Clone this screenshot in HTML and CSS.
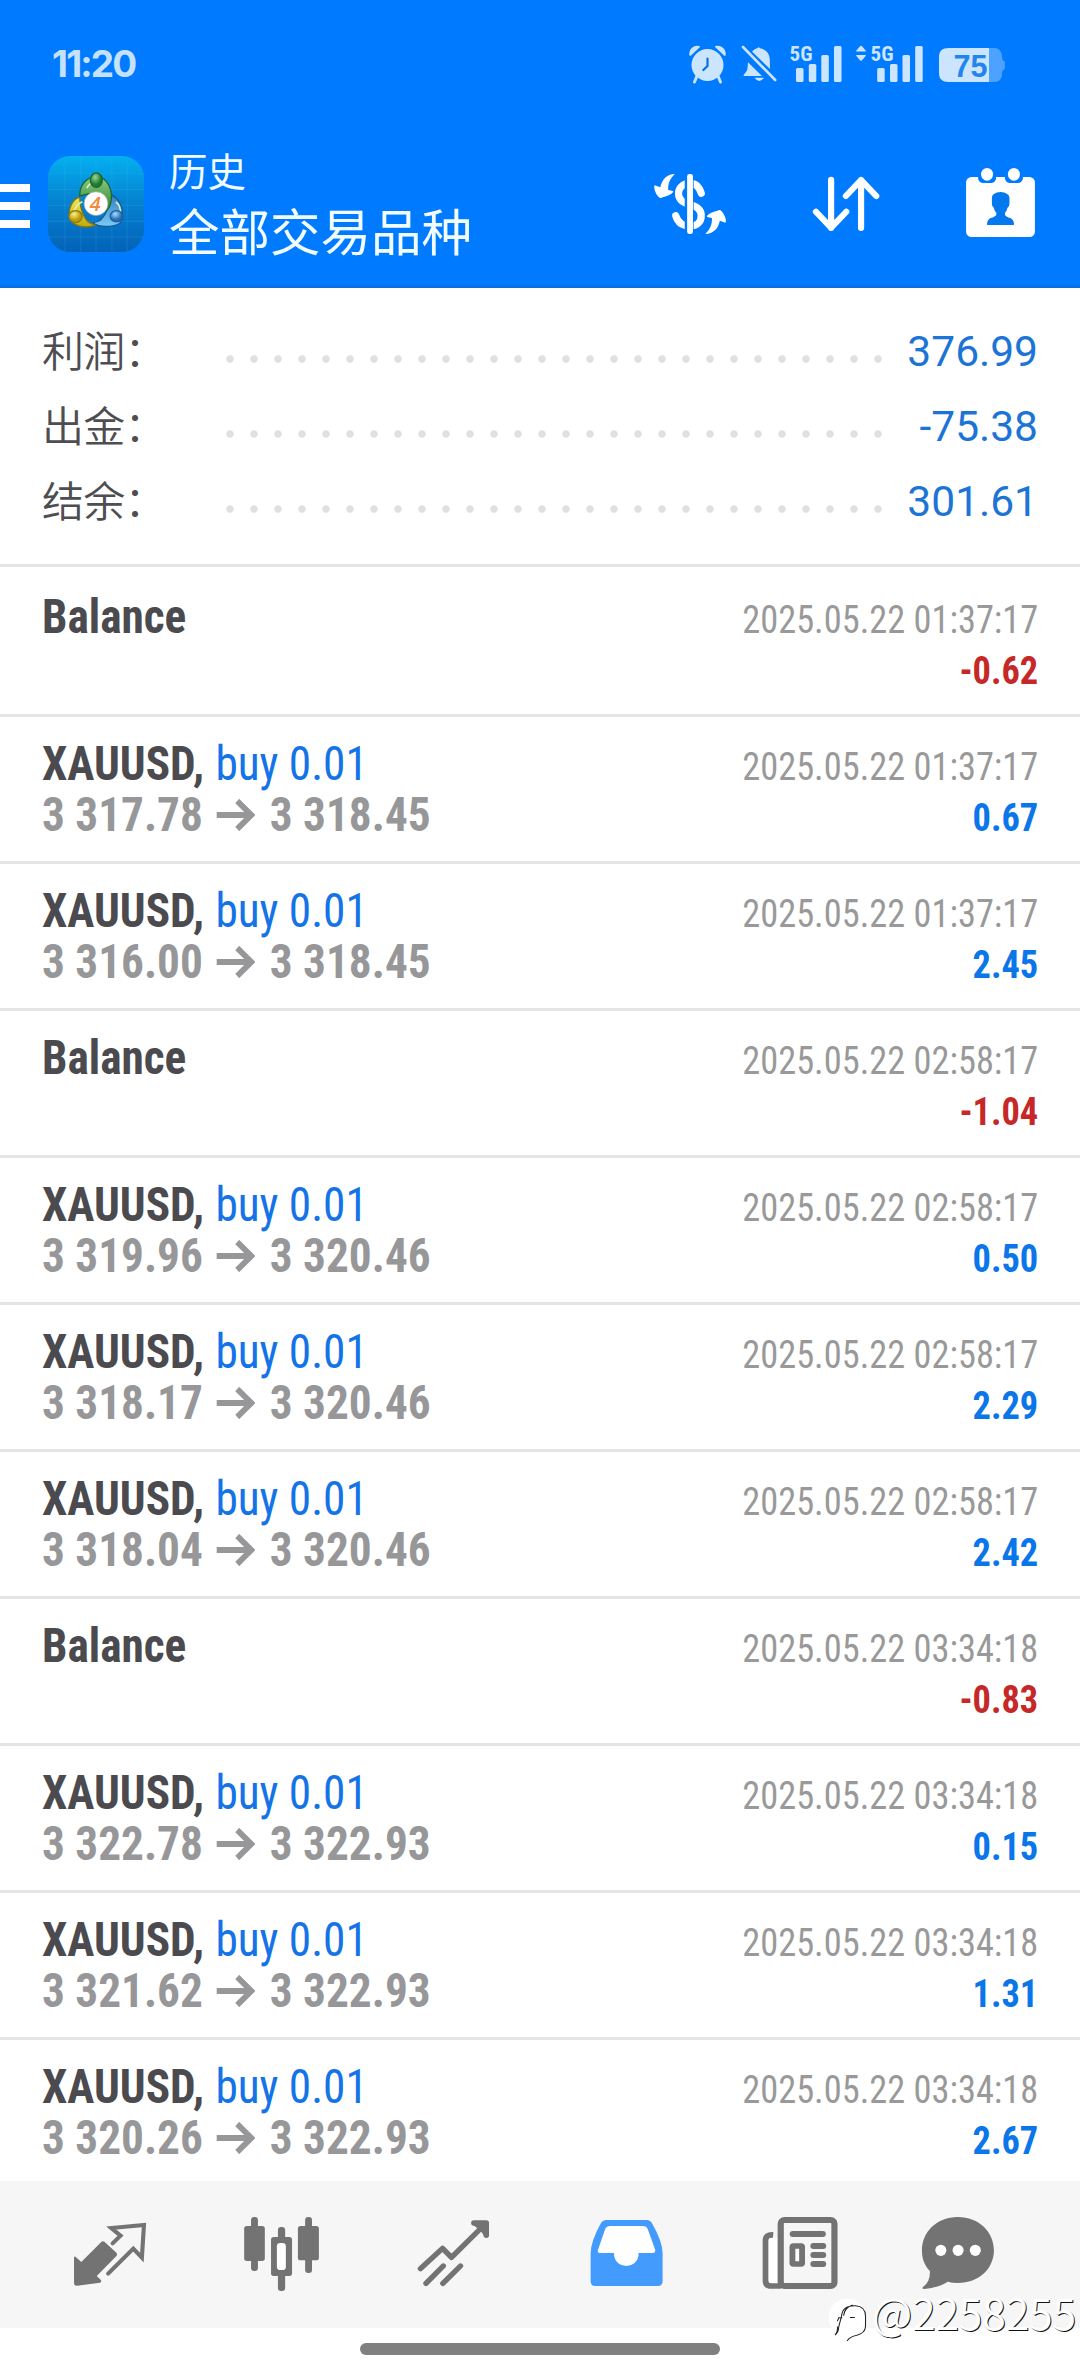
FILE: index.html
```html
<!DOCTYPE html>
<html lang="zh-CN">
<head>
<meta charset="utf-8">
<title>历史</title>
<link rel="stylesheet" href="styles.css">
</head>
<body>
<div class="screen">
  <header class="header">
    <div class="status">
      <time class="clock">11:20</time>
      <svg class="status-icons" viewBox="686 36 324 54" width="324" height="54">
        <g fill="#cce5ff">
          <circle cx="707.5" cy="65" r="16"/>
          <path d="M689.5 55.500a8 8 0 0 1 10-9.500q1 .5 0 1.500l-8.500 8q-1 .9-1.500 0zM725.500 55.500a8 8 0 0 0-10-9.500q-1 .5 0 1.500l8.500 8q1 .9 1.500 0z"/>
          <path d="M697 76l-2.500 6M718 76l2.500 6" stroke="#cce5ff" stroke-width="3" stroke-linecap="round"/>
          <path d="M707.500 58.500v7.500l-4.200 4" fill="none" stroke="#0a6fe0" stroke-width="2.200" stroke-linecap="round"/>
          <path d="M743.500 75.500q0-1 1.500-2.200c3-3 2.500-6 3-11l14 13.800h-17q-1.500 0-1.500-.6zM752 51.500c2-2 4-3 5.500-3.300q1-2 2.500 0c6 1.200 9.500 5.300 9.800 11.300l.2 9.500zM754.500 77.800h9.500q-4.700 6.500-9.500 0z"/>
          <path d="M743 47l32.200 33" stroke="#cce5ff" stroke-width="2.600" stroke-linecap="round"/>
          <text class="net" x="789.500" y="61" textLength="23" lengthAdjust="spacingAndGlyphs">5G</text>
          <text class="net" x="870.500" y="61" textLength="23" lengthAdjust="spacingAndGlyphs">5G</text>
          <g id="bars">
            <rect x="796" y="68" width="7.500" height="14" rx="1.500"/>
            <rect x="808.800" y="64" width="7.500" height="18" rx="1.500"/>
            <rect x="821.300" y="55" width="7.500" height="27" rx="1.500"/>
            <rect x="834" y="46" width="7.500" height="36" rx="1.500"/>
          </g>
          <use href="#bars" x="81.200"/>
          <path d="M856 51.500q0-.7 4-5.200 1-1 2 0 4 4.500 4 5.200zM856 55q0 .7 4 5.200 1 1 2 0 4-4.500 4-5.200z"/>
          <path d="M989 48h5c5 0 7.500 3 8 8 0 3 .5 4.500 2.800 5.500v7.500c-2.300 1-2.800 2.500-2.800 5.500-.5 5-3 7.500-8 7.500h-5z" fill="#4da2ff"/>
          <path d="M989 48h-40c-7 0-10 3-10 9v16c0 6 3 9 10 9h40z"/>
          <text class="charge" x="953.500" y="76.500" textLength="34" lengthAdjust="spacingAndGlyphs">75</text>
        </g>
      </svg>
    </div>
    <div class="appbar">
      <div class="menu"><i></i><i></i><i></i></div>
      <svg class="logo" viewBox="53 47 290 290" width="96" height="96">
        <defs>
          <linearGradient id="lb" x1="0" y1="0" x2="0" y2="1"><stop offset="0" stop-color="#04b0f0"/><stop offset=".45" stop-color="#0584d2"/><stop offset="1" stop-color="#0362b8"/></linearGradient>
          <linearGradient id="lg" x1="0" y1="0" x2="0" y2="1"><stop offset="0" stop-color="#8cc886"/><stop offset="1" stop-color="#2c8a2c"/></linearGradient>
          <linearGradient id="ly" x1="0" y1="0" x2="0" y2="1"><stop offset="0" stop-color="#f3e650"/><stop offset="1" stop-color="#c2a90c"/></linearGradient>
          <linearGradient id="lc" x1="0" y1="0" x2="0" y2="1"><stop offset="0" stop-color="#2e7fc4"/><stop offset="1" stop-color="#7ccaf5"/></linearGradient>
          <radialGradient id="hg" cx=".4" cy=".3"><stop offset="0" stop-color="#9ad794"/><stop offset="1" stop-color="#1f7a2d"/></radialGradient>
          <radialGradient id="hy" cx=".4" cy=".3"><stop offset="0" stop-color="#fff27a"/><stop offset="1" stop-color="#b99a12"/></radialGradient>
          <radialGradient id="hc" cx=".4" cy=".3"><stop offset="0" stop-color="#a6dcff"/><stop offset="1" stop-color="#246fb4"/></radialGradient>
        </defs>
        <rect x="53" y="47" width="290" height="290" rx="66" fill="url(#lb)"/>
        <path d="M104 49v286M152 47v290M198 47v290M246 47v290M292 49v286M53 99h290M53 148h290M53 196h290M53 244h290M53 292h290" stroke="#4cc0f5" stroke-opacity=".22" stroke-width="2.500"/>
        <g stroke-width="4">
          <path d="M187 249c8-4 16-2 24-8 8-8 20-22 22-40l14-36c24 14 38 46 28 78-6 18-60 24-88 6z" fill="url(#lc)" stroke="#175c99"/>
          <path d="M149 172c-20 4-36 30-31 62 10 25 48 34 78 22l-18-8c-10-6-28-30-29-76z" fill="url(#ly)" stroke="#7f7616"/>
          <path d="M149 168c-2-32 20-58 50-58 34 0 54 42 42 84-2 8-6 14-12 18 4-30-14-52-38-52-16 0-28 4-42 8z" fill="url(#lg)" stroke="#1e6532"/>
          <path d="M131 219c2-14 10-28 26-34M170 144c8-15 19-20 30-18M258 186c12 9 15 24 13 34" fill="none" stroke="#d9f0c0" stroke-width="5"/>
          <ellipse cx="199" cy="120" rx="18" ry="22" fill="url(#hg)" stroke="#1e6532"/>
          <ellipse cx="136" cy="230" rx="20" ry="18" fill="url(#hy)" stroke="#8a7a15"/>
          <ellipse cx="260" cy="229" rx="19" ry="17" fill="url(#hc)" stroke="#1c5d9e"/>
        </g>
        <circle cx="198" cy="191" r="36" fill="#fff" stroke="#a3a89a" stroke-width="2"/>
        <text x="196" y="213" class="logo-number">4</text>
      </svg>
      <div class="titles">
        <div class="subtitle">历史</div>
        <h1 class="title">全部交易品种</h1>
      </div>
      <div class="actions">
        <svg viewBox="235 378 435.500 486" width="150" height="162" preserveAspectRatio="none" fill="#fff">
          <path d="M468 580C461 557 450 550 436 550C412 550 402 566 402 580C402 604 420 609 436 614C462 621 468 634 468 647C468 669 452 678 436 678C412 678 399 664 394 647" fill="none" stroke="#fff" stroke-width="21" stroke-linecap="round"/>
          <rect x="420" y="522" width="26" height="180" fill="#007aff"/>
          <rect x="427" y="522" width="17" height="180" rx="7"/>
          <path id="curl" d="M391 522C368 523 354 538 349 562L333 556Q330 559 332 566C334 578 341 588 347 593Q350 595 356 592C366 590 378 586 386 577Q389 573 383 572L372 570C371 548 379 535 391 522Z"/>
          <use href="#curl" transform="rotate(180 435.500 612)"/>
        </svg>
        <svg viewBox="670.500 378 435.500 486" width="150" height="162" preserveAspectRatio="none" fill="none" stroke="#fff" stroke-width="18" stroke-linecap="round" stroke-linejoin="round">
          <path d="M845 539V684M801 635L845 683L889 635M932 684V540M888 588L932 540L976 588"/>
        </svg>
        <svg viewBox="1106 378 462 486" width="159" height="162" preserveAspectRatio="none" fill="#fff">
          <rect x="1237" y="531" width="200" height="180" rx="16"/>
          <path d="M1272 525h52v12q-4 12-14 12h-24q-10 0-14-12zM1350 525h52v12q-4 12-14 12h-24q-10 0-14-12z" fill="#007aff"/>
          <ellipse cx="1298" cy="523" rx="17.500" ry="19"/><ellipse cx="1376" cy="523" rx="17.500" ry="19"/>
          <path d="M1312 592Q1313 578 1337 576Q1361 578 1363 592V612Q1363 620 1357 624Q1355 634 1350 638V644Q1352 650 1366 654Q1377 660 1376 675H1298Q1297 660 1308 654Q1322 650 1325 644V638Q1319 634 1318 624Q1312 620 1312 612Z" fill="#0478ee"/>
        </svg>
      </div>
    </div>
  </header>

  <section class="summary">
    <div class="line"><span class="label">利润：</span><i class="dots"></i><span class="value">376.99</span></div>
    <div class="line"><span class="label">出金：</span><i class="dots"></i><span class="value">-75.38</span></div>
    <div class="line"><span class="label">结余：</span><i class="dots"></i><span class="value">301.61</span></div>
  </section>

  <main class="deals" id="deals"></main>

  <nav class="tabs">
    <svg viewBox="0 93 522.670 441" preserveAspectRatio="none" fill="none" stroke="#737373">
      <path d="M215 322Q217 317 221 322L236 336L294 276Q299 271 304 276L338 308Q342 313 338 318L281 378L293 390Q296 396 290 398L224 407Q215 408 215 399Z" fill="#737373" stroke="none"/>
      <path d="M327 280L350 257L323 234L418 225L412 323L387 296L314 371" stroke-width="12" stroke-linecap="round"/>
    </svg>
    <svg viewBox="522.670 93 522.670 441" preserveAspectRatio="none" fill="#737373">
      <rect x="709" y="228" width="60" height="105" rx="8"/><rect x="729" y="201" width="20" height="162" rx="9"/>
      <rect x="865" y="228" width="61" height="103" rx="8"/><rect x="886" y="201" width="20" height="168" rx="9"/>
      <rect x="787" y="261" width="61" height="117" rx="8"/><rect x="807" y="231" width="21" height="192" rx="9"/>
      <rect x="804" y="279" width="26" height="81" rx="10" fill="#fff"/>
    </svg>
    <svg viewBox="1045.330 93 522.670 441" preserveAspectRatio="none" fill="none" stroke="#737373" stroke-width="16" stroke-linecap="round" stroke-linejoin="round">
      <path d="M1221 356L1285 295L1311 322L1409 222M1376 219H1412V256"/>
      <path d="M1376 219H1412V256L1400 238Z" fill="#737373" stroke-width="12"/>
      <path d="M1237 400L1287 348M1286 400L1337 348"/>
    </svg>
    <svg viewBox="0 93 522.670 441" preserveAspectRatio="none" fill="#429bfd">
      <path d="M192 210H310Q320 210 326 221Q356 275 356 310V394Q356 408 342 408H160Q147 408 147 394V310Q147 275 176 221Q182 210 192 210Z"/>
      <path d="M204 228H298Q309 228 313 238L334 298Q337 309 327 309H286V318A36 36 0 0 1 215 318V309H174Q165 309 169 298L189 238Q193 228 204 228Z" fill="#fff"/>
    </svg>
    <svg viewBox="522.670 93 522.670 441" preserveAspectRatio="none" fill="none" stroke="#737373">
      <path d="M677 255Q655 253 655 272V392Q655 408 671 408H700" stroke-width="17"/>
      <path d="M664 272Q664 264 673 264H690V399H673Q664 399 664 390Z" fill="#fff" stroke="none"/>
      <rect x="699" y="210" width="156" height="198" rx="11" stroke-width="18"/>
      <path d="M734 252H821M794 288H822M794 315H822M794 342H822" stroke-width="18" stroke-linecap="round"/>
      <rect x="733" y="288" width="28" height="54" rx="3" fill="#fff" stroke-width="17"/>
    </svg>
    <svg viewBox="0 93 522.670 441" preserveAspectRatio="none">
      <g transform="translate(-1045.330 0)">
        <path d="M1213 201C1275 201 1318 246 1318 301C1318 356 1275 399 1213 399Q1196 399 1184 395C1163 408 1140 415 1116 417Q1107 417 1112 411Q1134 395 1132 363C1115 345 1109 325 1109 301C1109 246 1152 201 1213 201Z" fill="#737373"/>
        <ellipse cx="1164" cy="301" rx="16" ry="17" fill="#fff"/><ellipse cx="1214" cy="301" rx="16" ry="17" fill="#fff"/><ellipse cx="1264" cy="301" rx="16" ry="17" fill="#fff"/>
      </g>
    </svg>
  </nav>
  <div class="gesture"><i></i></div>

  <div class="watermark">
    <svg viewBox="837 440 118 140" width="41" height="47" preserveAspectRatio="none" fill="none">
      <ellipse cx="892" cy="500" rx="54" ry="55" fill="#fff"/>
      <path d="M857 553Q867 548 868 528L876 497Q878 465 916 466Q945 468 945 497V528Q944 548 920 554Q900 558 892 571M864 512L868 502H878M900 501H914M882 496Q884 472 908 464M864 528Q866 545 857 553" stroke="#222" stroke-width="3"/>
    </svg>
    <span>@2258255</span>
  </div>
</div>
<script src="deals.js"></script>
</body>
</html>
```
FILE: styles.css
```css
* { box-sizing: border-box; }

body {
  margin: 0;
  background: #fff;
  font-family: Roboto, "Noto Sans CJK SC", sans-serif;
}

.screen {
  position: relative;
  display: flex;
  flex-direction: column;
  width: 1080px;
  height: 2376px;
  overflow: hidden;
}

.header {
  flex: none;
  height: 288px;
  background: linear-gradient(to bottom, #007aff 284px, #0a6cd6 288px);
}

.status {
  display: flex;
  justify-content: space-between;
  align-items: flex-start;
  height: 126px;
  padding: 36px 70px 0 52px;
}

.clock {
  font: 700 37px/56px Inter, sans-serif;
  letter-spacing: -1.8px;
  color: #c4e1ff;
}

.net { font: 700 21px "Roboto Condensed", sans-serif; }
.charge { font: 700 31px "Liberation Sans", sans-serif; fill: #2484ee; }

.appbar {
  display: flex;
  height: 162px;
}

.menu {
  display: flex;
  flex-direction: column;
  gap: 10px;
  width: 48px;
  padding-top: 58px;
}

.menu i {
  width: 30px;
  height: 8px;
  background: #fff;
}

.logo { margin-top: 30px; }

.logo-number {
  font: italic 600 60px "Open Sans", sans-serif;
  fill: #f08a3c;
  text-anchor: middle;
}

.titles {
  padding: 18px 0 0 25px;
  font-family: "Noto Sans CJK SC", sans-serif;
  color: #f2fdff;
}

.subtitle { font-size: 38.500px; line-height: 50px; }

.title {
  margin: 3px 0 0;
  font-size: 50.500px;
  font-weight: 400;
  line-height: 64px;
}

.actions {
  display: flex;
  margin-left: auto;
}

.summary {
  flex: none;
  height: 276px;
  padding: 26px 42px 0;
}

.line {
  display: flex;
  height: 75px;
}

.label {
  width: 184px;
  font: 350 42px/69px "Noto Sans CJK SC", sans-serif;
  letter-spacing: -.8px;
  color: #4d4d52;
}

.dots {
  width: 672px;
  height: 8px;
  margin-top: 41px;
  background: radial-gradient(circle at 4px 4px, #e0e0e0 3.300px, transparent 4.200px) 0 0 / 24px 8px;
}

.value {
  margin-left: auto;
  font-size: 42.500px;
  line-height: 75px;
  color: #1c74d6;
}

.deals {
  flex: 1;
  min-height: 0;
  overflow: hidden;
  font-family: "Roboto Condensed", Roboto, sans-serif;
  line-height: 51px;
}

.deal {
  display: flex;
  justify-content: space-between;
  height: 147px;
  padding: 21px 42px 0;
  border-top: 3px solid #e4e4e5;
}

.deal:first-child {
  height: 150px;
  padding-top: 24px;
}

.info {
  font-size: 48px;
  color: #4a4a4f;
  white-space: nowrap;
  transform: scaleX(.943);
  transform-origin: left;
}

.name { font-weight: 700; }
.side { margin-left: 1px; color: #1473e6; }

.prices {
  display: flex;
  align-items: center;
  font-weight: 700;
  color: #97979a;
}

.arrow { margin: 1px 16px 0 14px; }

.result {
  padding-top: 4px;
  font-size: 39px;
  text-align: right;
  white-space: nowrap;
  transform: scaleX(.933);
  transform-origin: right;
}

.date { color: #999; }
.amount { font-weight: 700; }
.gain { color: #0a76ea; }
.loss { color: #c62828; }

.tabs {
  flex: none;
  display: grid;
  grid-template-columns: repeat(6, 1fr);
  height: 147px;
  background: #f6f6f6;
}

.tabs svg {
  display: block;
  width: 180px;
  height: 147px;
}

.gesture {
  flex: none;
  display: flex;
  justify-content: center;
  height: 48px;
  padding-top: 15px;
}

.gesture i {
  width: 360px;
  height: 12px;
  border-radius: 6px;
  background: #808080;
}

.watermark {
  position: absolute;
  left: 828px;
  top: 2297px;
  display: flex;
  align-items: flex-start;
  gap: 3px;
}

.watermark span {
  font: 350 43px/44px "Noto Sans CJK SC", sans-serif;
  letter-spacing: -.2px;
  margin-top: -8px;
  color: #fff;
  text-shadow: 1px 1px 0 #111;
}
```
FILE: deals.js
```js
// [date, result] for balance operations, [date, result, open, close] for trades
const deals = [
  ['2025.05.22 01:37:17', '-0.62'],
  ['2025.05.22 01:37:17', '0.67', '3 317.78', '3 318.45'],
  ['2025.05.22 01:37:17', '2.45', '3 316.00', '3 318.45'],
  ['2025.05.22 02:58:17', '-1.04'],
  ['2025.05.22 02:58:17', '0.50', '3 319.96', '3 320.46'],
  ['2025.05.22 02:58:17', '2.29', '3 318.17', '3 320.46'],
  ['2025.05.22 02:58:17', '2.42', '3 318.04', '3 320.46'],
  ['2025.05.22 03:34:18', '-0.83'],
  ['2025.05.22 03:34:18', '0.15', '3 322.78', '3 322.93'],
  ['2025.05.22 03:34:18', '1.31', '3 321.62', '3 322.93'],
  ['2025.05.22 03:34:18', '2.67', '3 320.26', '3 322.93']
];

const arrow = '<svg class="arrow" width="41" height="32" viewBox="0 0 41 32" fill="none" stroke="#97979a" stroke-width="6"><path d="M0 16H37M22 2L37 16L22 30"/></svg>';

document.getElementById('deals').innerHTML = deals.map(([date, result, open, close]) => `
  <article class="deal">
    <div class="info">
      ${open
        ? `<div><span class="name">XAUUSD,</span> <span class="side">buy 0.01</span></div>
           <div class="prices"><span>${open}</span>${arrow}<span>${close}</span></div>`
        : '<div class="name">Balance</div>'}
    </div>
    <div class="result">
      <div class="date">${date}</div>
      <div class="amount ${result.startsWith('-') ? 'loss' : 'gain'}">${result}</div>
    </div>
  </article>`).join('');
```
